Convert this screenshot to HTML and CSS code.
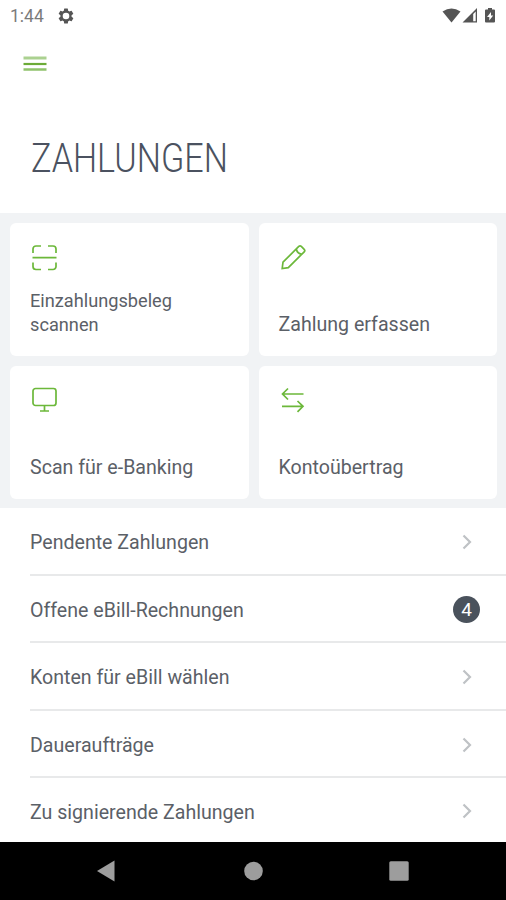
FILE: index.html
```html
<!DOCTYPE html>
<html lang="de">
<head>
<meta charset="utf-8">
<title>Zahlungen</title>
<link rel="stylesheet" href="styles.css">
</head>
<body>
<div class="status">
  <span class="time">1:44</span>
  <svg class="gear" viewBox="0 0 24 24"><path fill-rule="evenodd" d="M19.4 13a7.500 7.500 0 0 0 0-2l2.100-1.650a.5.5 0 0 0 .12-.64l-2-3.460a.5.5 0 0 0-.61-.22l-2.490 1a7.300 7.300 0 0 0-1.690-.98l-.38-2.650A.49.49 0 0 0 14 2h-4a.49.49 0 0 0-.49.420l-.38 2.650a7.700 7.700 0 0 0-1.690.98l-2.490-1a.49.49 0 0 0-.61.220l-2 3.460a.49.49 0 0 0 .12.640L4.570 11a7.900 7.900 0 0 0 0 2l-2.110 1.650a.5.5 0 0 0-.12.640l2 3.460a.5.5 0 0 0 .61.220l2.490-1a7.300 7.300 0 0 0 1.690.98l.38 2.650a.49.49 0 0 0 .49.420h4a.49.49 0 0 0 .49-.420l.38-2.650a7.700 7.700 0 0 0 1.690-.98l2.490 1a.49.49 0 0 0 .61-.220l2-3.460a.49.49 0 0 0-.12-.640zM12 7.600a4.400 4.400 0 1 1 0 8.800a4.400 4.400 0 0 1 0-8.800z"/></svg>
  <svg class="signals" viewBox="0 0 56 18"><path d="M.5 4.500Q9.500-1.500 18.500 4.500L9.500 15.500z"/><path fill-rule="evenodd" d="M35 1v14.500H20.500zM33.700 4.500l-2.500 2.500v7.200h2.500z"/><path fill-rule="evenodd" d="M46 1h4v1.500h2a1 1 0 0 1 1 1v11a1 1 0 0 1-1 1h-8a1 1 0 0 1-1-1v-11a1 1 0 0 1 1-1h2zM49 5l-4 5h2.300v3.500l3.900-5H49z"/></svg>
</div>
<header class="header">
  <svg class="menu" viewBox="0 0 24 16"><path class="m1" d="M.5 2h23"/><path class="m2" d="M.5 8h23"/><path class="m3" d="M.5 13.500h23"/></svg>
  <h1><span>ZAHLUNGEN</span></h1>
</header>
<main class="tiles">
  <a class="tile"><svg viewBox="0 0 28 28"><path d="M2 9V5a3 3 0 0 1 3-3h5M17 2h5a3 3 0 0 1 3 3v4M2 18.500v4a3 3 0 0 0 3 3h5M17 25.500h5a3 3 0 0 0 3-3v-4M1.500 13.700h24"/></svg><span class="small">Einzahlungsbeleg<br>scannen</span></a>
  <a class="tile"><svg viewBox="0 0 28 28"><path d="M2.200 24.500l.8-6.300L18.800 2.400a1.800 1.800 0 0 1 2.500 0l2.900 2.900a1.800 1.800 0 0 1 0 2.500L8.300 23.700zM16.300 5c.6 2.800 2.500 4.800 5.400 5.300"/></svg><span>Zahlung erfassen</span></a>
  <a class="tile"><svg viewBox="0 0 28 28"><rect x="2" y="1.500" width="23" height="17" rx="2.500"/><path d="M13.500 18.500v5.500M9 24h9"/></svg><span>Scan für e-Banking</span></a>
  <a class="tile"><svg viewBox="0 0 28 28"><path d="M23.500 7H2.500M8 1.500L2.500 7L8 12.500M2 19.300h21M17.500 14l5.500 5.300l-5.500 5.500"/></svg><span>Kontoübertrag</span></a>
</main>
<nav class="list">
  <a class="row"><span>Pendente Zahlungen</span><svg class="chev" viewBox="0 0 10 16"><path d="M1.500 1.500L8 8l-6.500 6.500"/></svg></a>
  <a class="row"><span>Offene eBill-Rechnungen</span><b class="badge">4</b></a>
  <a class="row"><span>Konten für eBill wählen</span><svg class="chev" viewBox="0 0 10 16"><path d="M1.500 1.500L8 8l-6.500 6.500"/></svg></a>
  <a class="row"><span>Daueraufträge</span><svg class="chev" viewBox="0 0 10 16"><path d="M1.500 1.500L8 8l-6.500 6.500"/></svg></a>
  <a class="row"><span>Zu signierende Zahlungen</span><svg class="chev" viewBox="0 0 10 16"><path d="M1.500 1.500L8 8l-6.500 6.500"/></svg></a>
</nav>
<footer class="navbar">
  <svg viewBox="0 0 20 22"><path d="M1 11L18.500.500v21z"/></svg>
  <svg viewBox="0 0 20 22"><circle cx="10.500" cy="11" r="9.300"/></svg>
  <svg viewBox="0 0 20 22"><rect x=".3" y="1.300" width="19.400" height="19.400" rx="1.500"/></svg>
</footer>
</body>
</html>
```
FILE: styles.css
```css
* { box-sizing: border-box; }
body {
  margin: 0;
  width: 506px;
  height: 900px;
  overflow: hidden;
  display: flex;
  flex-direction: column;
  background: #fff;
  color: #5b6067;
  font-family: Roboto, sans-serif;
  font-size: 19.600px;
}
svg { display: block; flex: none; }
.status { display: flex; align-items: center; height: 32px; padding: 0 8px 0 10px; }
.time { font-size: 17.500px; color: #7b7b7b; }
.gear { width: 18px; height: 18px; margin-left: 13px; fill: #555; }
.signals { width: 56px; height: 18px; margin-left: auto; fill: #555; }
.header { height: 181px; padding: 24px 0 0 23px; }
.menu { width: 24px; height: 16px; fill: none; stroke-width: 2.200; }
.m1 { stroke: #abd190; stroke-width: 3; }
.m2 { stroke: #6cab37; }
.m3 { stroke: #8fc26b; stroke-width: 2.500; }
h1 {
  margin: 62px 0 0 8px;
  height: 50px;
  font-size: 40px;
  line-height: 50px;
  font-weight: 300;
  color: #4b5260;
}
h1 span { display: inline-block; transform: scaleX(.853); transform-origin: left; }
.tiles {
  display: grid;
  grid-template-columns: 1fr 1fr;
  grid-template-rows: 133px 133px;
  gap: 10px;
  height: 295px;
  padding: 10px 9px 0 10px;
  background: #f1f3f5;
}
.tile {
  display: flex;
  flex-direction: column;
  justify-content: space-between;
  padding: 21px 20px 19px;
  border-radius: 6px;
  background: #fff;
  line-height: 24px;
}
.tile .small { font-size: 18.200px; }
.tile svg { width: 28px; height: 28px; margin-left: 1px; fill: none; stroke: #6cb83a; stroke-width: 1.700; }
.row {
  display: flex;
  align-items: center;
  justify-content: space-between;
  height: 67.600px;
  margin-left: 30px;
  padding: 2px 34px 0 0;
  border-bottom: 2px solid #e8e9ea;
}
.row span { padding-top: 2px; }
.row:last-child { height: 66px; border-bottom: 0; padding-top: 0; }
.chev { width: 10px; height: 16px; fill: none; stroke: #bfc2c5; stroke-width: 2.200; }
.badge {
  width: 27px;
  height: 27px;
  margin-right: -8px;
  border-radius: 50%;
  background: #4a525c;
  color: #fff;
  font-size: 19px;
  line-height: 28px;
  font-weight: 400;
  text-align: center;
}
.list { height: 334px; overflow: hidden; }
.navbar {
  display: flex;
  align-items: center;
  justify-content: space-between;
  height: 58px;
  padding: 0 97px 0 96px;
  background: #000;
}
.navbar svg { width: 20px; height: 22px; fill: #9d9d9d; }
```
